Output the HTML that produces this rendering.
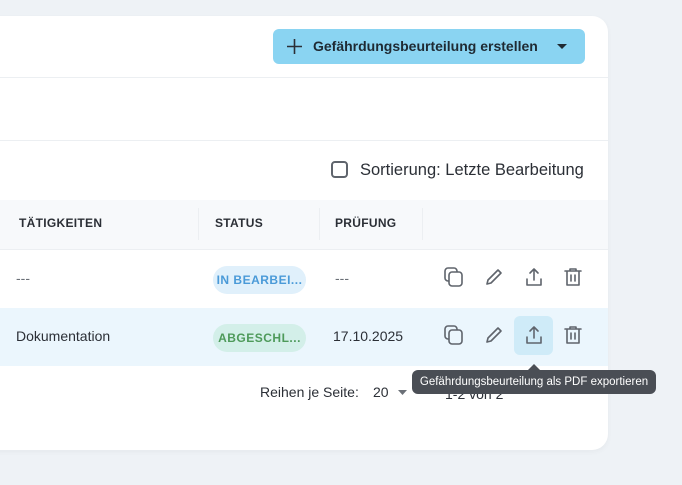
<!DOCTYPE html><html><head><style>
body{margin:0;width:682px;height:485px;background:#eef2f6;font-family:"Liberation Sans",sans-serif;position:relative;overflow:hidden;color:#2b2f36}
.card{position:absolute;left:-20px;top:16px;width:628px;height:434px;background:#fff;border-radius:16px;box-shadow:0 2px 6px rgba(0,0,0,.04)}
.a{position:absolute}
.hl{position:absolute;left:0;width:608px;height:1px;background:#eceff2}
.th{position:absolute;top:216px;font-size:12px;font-weight:bold;letter-spacing:.3px;color:#2b2f36}
.sep{position:absolute;top:208px;width:1px;height:32px;background:#eceff2}
.chip{position:absolute;width:93px;height:28px;border-radius:14px;font-size:12px;font-weight:bold;line-height:28px;text-align:center;letter-spacing:.5px}
svg.i{position:absolute;width:22px;height:22px;fill:none;stroke:#5f646c;stroke-width:1.6;stroke-linecap:round;stroke-linejoin:round}
</style></head><body>
<div class="card"></div>
<div class="a" style="left:273px;top:29px;width:312px;height:35px;background:#8ad4f2;border-radius:6px"></div>
<svg class="a" style="left:286px;top:38px" width="17" height="17"><path d="M8.5 1v15M1 8.5h15" stroke="#2b2f36" stroke-width="1.6"/></svg>
<div class="a" style="left:313px;top:38px;font-size:14px;font-weight:bold;color:#1f2a33">Gefährdungsbeurteilung erstellen</div>
<svg class="a" style="left:557px;top:44px" width="10" height="6"><path d="M0 0h10L5 5z" fill="#1f2a33"/></svg>
<div class="hl" style="top:77px"></div>
<div class="hl" style="top:140px"></div>
<div class="a" style="left:331px;top:161px;width:13px;height:13px;border:2px solid #5f646c;border-radius:4px"></div>
<div class="a" style="left:360px;top:161px;font-size:16.5px;color:#2b2f36">Sortierung: Letzte Bearbeitung</div>
<div class="a" style="left:0;top:200px;width:608px;height:49px;background:#f7f9fb"></div>
<div class="sep" style="left:198px"></div><div class="sep" style="left:319px"></div><div class="sep" style="left:422px"></div>
<div class="th" style="left:19px">TÄTIGKEITEN</div>
<div class="th" style="left:215px">STATUS</div>
<div class="th" style="left:335px">PRÜFUNG</div>
<div class="hl" style="top:249px"></div>
<div class="a" style="left:16px;top:270px;font-size:14px;color:#6b7077">---</div>
<div class="chip" style="left:213px;top:266px;background:#e0f0fb;color:#4a9ad8">IN BEARBEI...</div>
<div class="a" style="left:335px;top:270px;font-size:14px;color:#6b7077">---</div>
<div class="a" style="left:0;top:308px;width:608px;height:58px;background:#ebf6fd"></div>
<div class="a" style="left:16px;top:328px;font-size:14px">Dokumentation</div>
<div class="chip" style="left:213px;top:324px;background:#d3efe9;color:#4e9a5a">ABGESCHL...</div>
<div class="a" style="left:333px;top:328px;font-size:14px">17.10.2025</div>
<div class="a" style="left:514px;top:316px;width:39px;height:39px;background:#cfebf8;border-radius:6px"></div>
<svg width="0" height="0" style="position:absolute"><defs>
<g id="ed"><path d="M4 18l1-4L15 4l3 3L8 17z"/></g>
<g id="ex"><path d="M11 3v11M7 7l4-4 4 4M4 13v6h14v-6"/></g>
<g id="tr"><path d="M3 5h16M8 5V3h6v2M5 5v14h12V5M9 9v6M13 9v6"/></g>
</defs></svg>
<svg class="i" style="left:443px;top:266px"><rect x="2" y="2" width="12" height="13" rx="3"/><rect x="6" y="6" width="13" height="14" rx="3" fill="#fff"/></svg>
<svg class="i" style="left:483px;top:266px"><use href="#ed"/></svg>
<svg class="i" style="left:523px;top:266px"><use href="#ex"/></svg>
<svg class="i" style="left:562px;top:266px"><use href="#tr"/></svg>
<svg class="i" style="left:443px;top:324px"><rect x="2" y="2" width="12" height="13" rx="3"/><rect x="6" y="6" width="13" height="14" rx="3" fill="#ebf6fd"/></svg>
<svg class="i" style="left:483px;top:324px"><use href="#ed"/></svg>
<svg class="i" style="left:523px;top:324px"><use href="#ex"/></svg>
<svg class="i" style="left:562px;top:324px"><use href="#tr"/></svg>
<div class="a" style="left:260px;top:384px;font-size:14px">Reihen je Seite:</div>
<div class="a" style="left:373px;top:384px;font-size:14px">20</div>
<svg class="a" style="left:398px;top:390px" width="9" height="5"><path d="M0 0h9L4.5 5z" fill="#6b7077"/></svg>
<div class="a" style="left:445px;top:386px;font-size:14px">1-2 von 2</div>
<svg class="a" style="left:528px;top:364px" width="12" height="6"><path d="M0 6L6 0l6 6z" fill="#4a4e55"/></svg>
<div class="a" style="left:412px;top:370px;width:244px;height:24px;background:#4a4e55;border-radius:6px;color:#fff;font-size:11.5px;line-height:24px;text-align:center">Gefährdungsbeurteilung als PDF exportieren</div>
</body></html>
